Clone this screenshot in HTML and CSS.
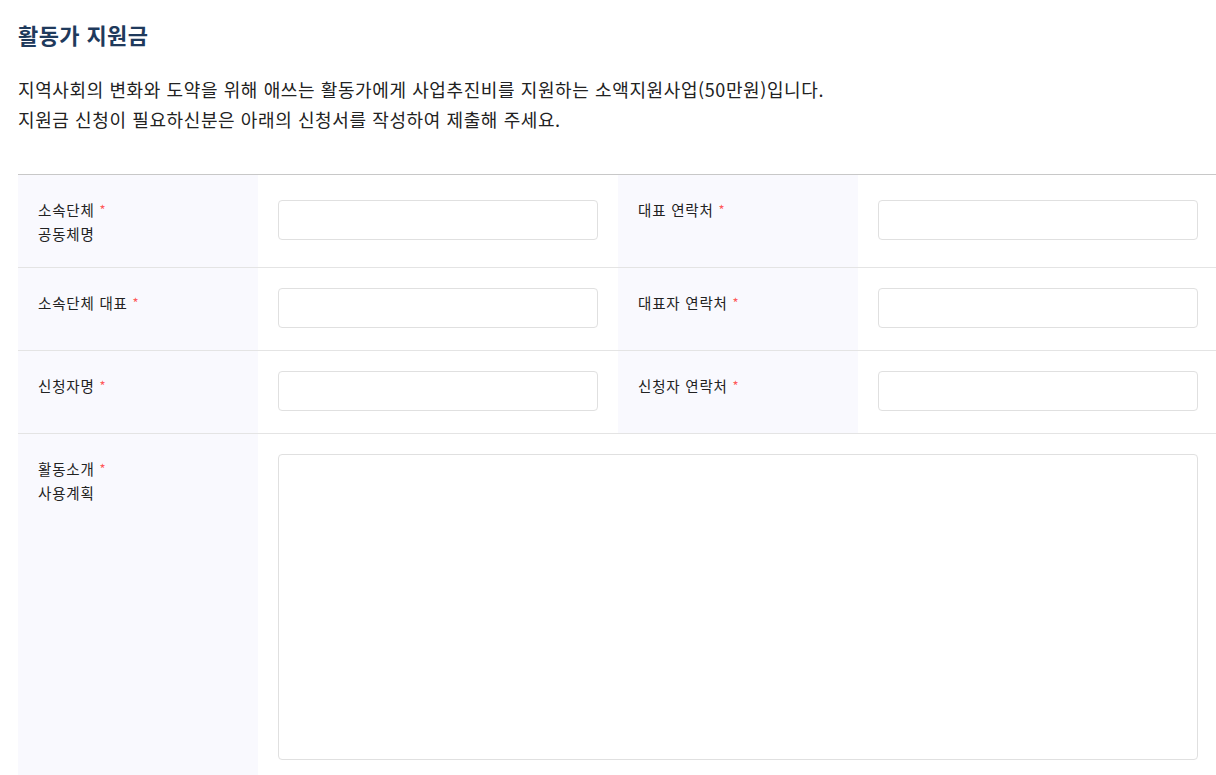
FILE: index.html
```html
<!DOCTYPE html>
<html lang="ko">
<head>
<meta charset="utf-8">
<title>활동가 지원금</title>
<link rel="stylesheet" href="styles.css">
</head>
<body>
<main class="page">
  <h2 class="title">활동가 지원금</h2>
  <p class="desc">지역사회의 변화와 도약을 위해 애쓰는 활동가에게 사업추진비를 지원하는 소액지원사업(50만원)입니다.<br>지원금 신청이 필요하신분은 아래의 신청서를 작성하여 제출해 주세요.</p>
  <div class="form">
    <div class="row">
      <div class="label">소속단체 <span class="req">*</span><br>공동체명</div>
      <div class="field"><input type="text" class="input"></div>
      <div class="label">대표 연락처 <span class="req">*</span></div>
      <div class="field"><input type="text" class="input"></div>
    </div>
    <div class="row">
      <div class="label">소속단체 대표 <span class="req">*</span></div>
      <div class="field"><input type="text" class="input"></div>
      <div class="label">대표자 연락처 <span class="req">*</span></div>
      <div class="field"><input type="text" class="input"></div>
    </div>
    <div class="row">
      <div class="label">신청자명 <span class="req">*</span></div>
      <div class="field"><input type="text" class="input"></div>
      <div class="label">신청자 연락처 <span class="req">*</span></div>
      <div class="field"><input type="text" class="input"></div>
    </div>
    <div class="row row-wide">
      <div class="label">활동소개 <span class="req">*</span><br>사용계획</div>
      <div class="field field-wide"><textarea class="textarea"></textarea></div>
    </div>
  </div>
</main>
</body>
</html>
```
FILE: styles.css
```css
html, body {
  margin: 0;
  padding: 0;
  overflow: hidden;
  background: #ffffff;
}
body {
  font-family: "Noto Sans CJK KR", "Noto Sans", sans-serif;
  color: #222222;
}
.page {
  padding: 18px 0 0 18px;
}
.title {
  margin: 0;
  font-size: 22px;
  line-height: 32px;
  font-weight: 700;
  letter-spacing: 0.4px;
  color: #1f3a5c;
}
.desc {
  margin: 24px 0 0;
  font-size: 18px;
  line-height: 30px;
  letter-spacing: 0.6px;
  color: #222222;
}
.form {
  margin-top: 40px;
  width: 1200px;
  border-top: 1px solid #c8c8c8;
}
.row {
  display: grid;
  grid-template-columns: 240px 360px 240px 360px;
  border-bottom: 1px solid #e4e4e4;
}
.row-wide {
  grid-template-columns: 240px 960px;
  border-bottom: none;
}
.label {
  background: #f9f9fe;
  padding: 23px 20px 21px;
  font-size: 14.5px;
  line-height: 24px;
  letter-spacing: 0.8px;
  color: #222222;
}
.req {
  color: #ff5a5a;
  font-size: 13px;
  line-height: 1;
  position: relative;
  top: -1px;
}
.field {
  display: flex;
  align-items: center;
  padding: 20px 20px 22px;
}
.field-wide {
  align-items: flex-start;
}
.input {
  display: block;
  box-sizing: border-box;
  width: 320px;
  height: 40px;
  margin: 0;
  border: 1px solid #e0e0e0;
  border-radius: 4px;
  background: #ffffff;
}
.textarea {
  display: block;
  box-sizing: border-box;
  width: 920px;
  height: 306px;
  margin: 0;
  border: 1px solid #e0e0e0;
  border-radius: 4px;
  background: #ffffff;
  resize: none;
}
```
